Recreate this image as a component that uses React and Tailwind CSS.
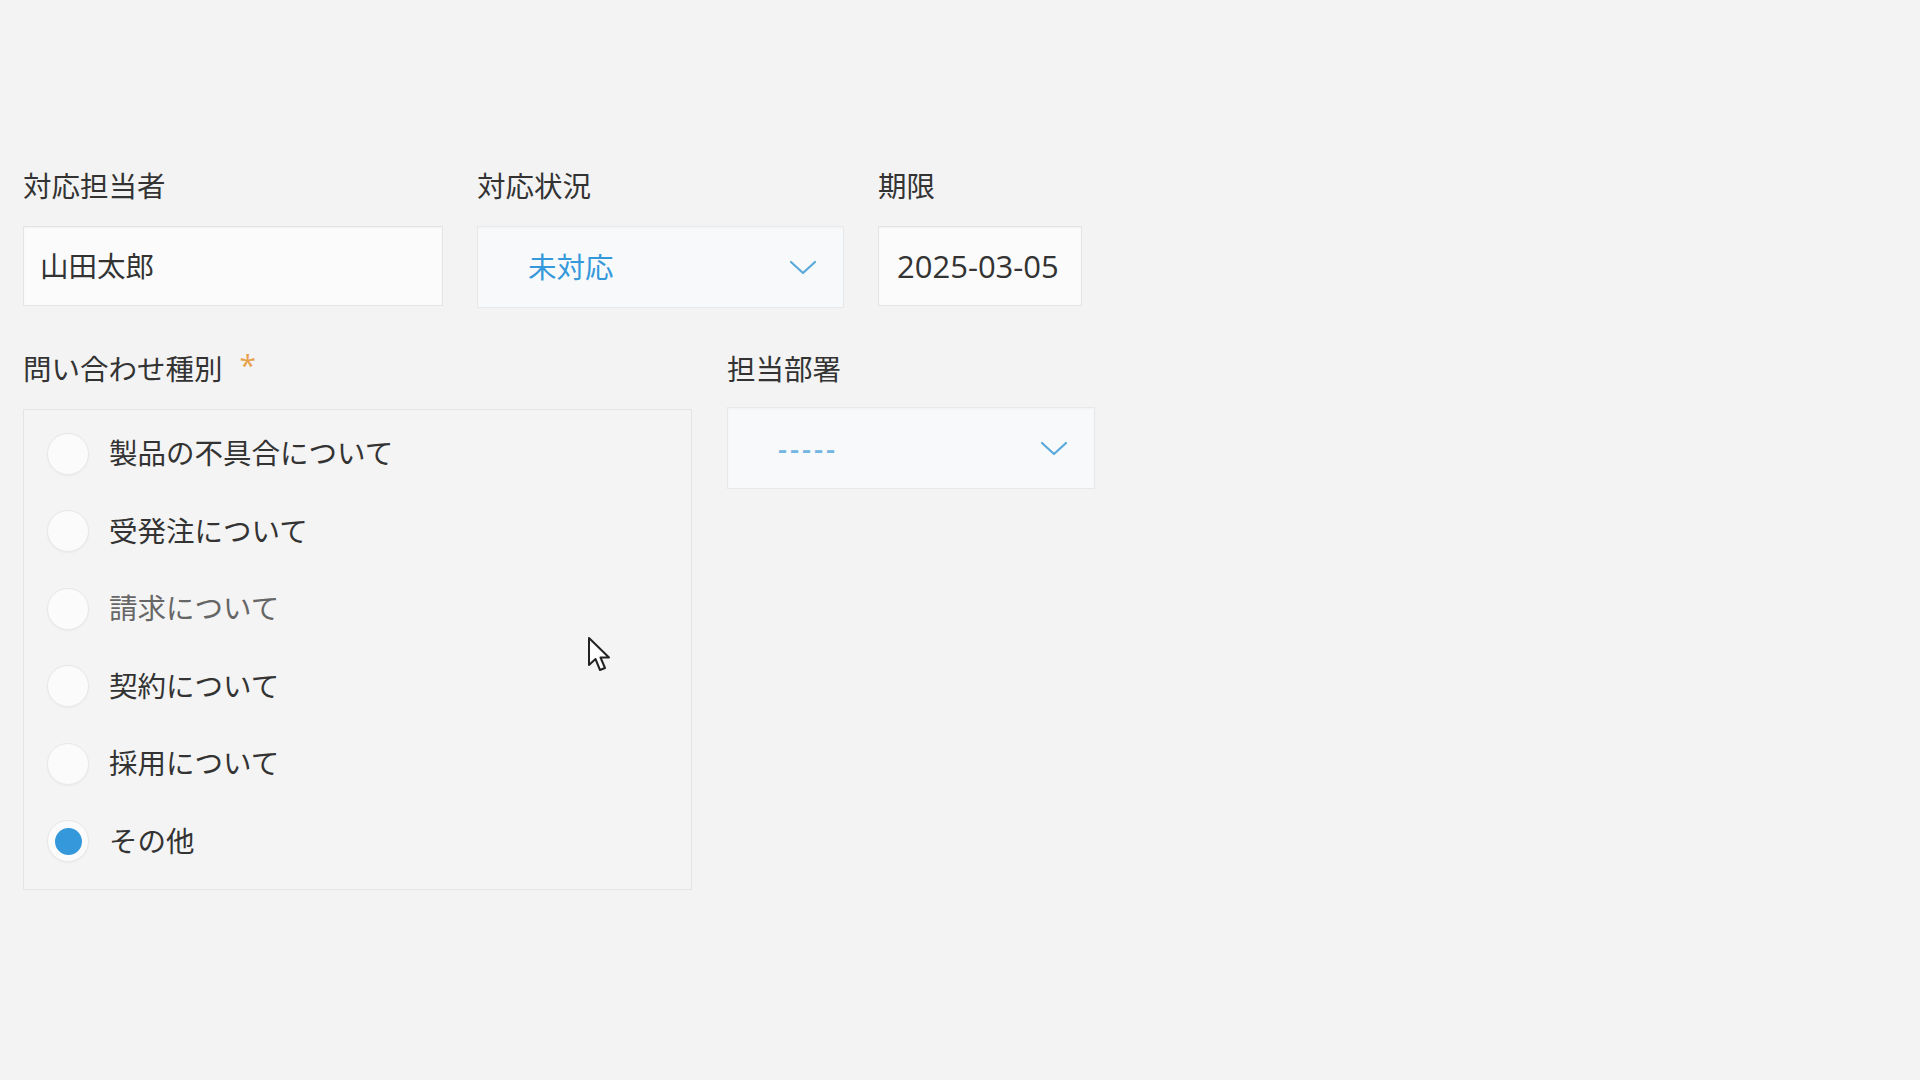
const FONT = { fontFamily: '"Open Sans", "Noto Sans CJK JP", sans-serif' };

const OPTIONS = [
  "製品の不具合について",
  "受発注について",
  "請求について",
  "契約について",
  "採用について",
  "その他",
];

function Chevron() {
  return (
    <svg width="28" height="15" viewBox="0 0 28 15" fill="none" className="shrink-0">
      <path d="M2 2 L14 13 L26 2" stroke="#5aa9da" strokeWidth="2.2" strokeLinecap="round" strokeLinejoin="round" />
    </svg>
  );
}

function Label({ children, required }) {
  return (
    <div className="flex h-[40px] items-center text-[28.5px] leading-[40px] text-[#333]">
      <span>{children}</span>
      {required && <span className="ml-[17px] -mt-[8px] text-[30px] text-[#e8a04a]">*</span>}
    </div>
  );
}

function SelectBox({ value, width, dashed }) {
  return (
    <div
      className="flex h-[82px] items-center justify-between border border-[#e6e8ea] bg-[#f7f9fa] pl-[50px] pr-[26px] shadow-[inset_0_1px_2px_rgba(0,0,0,0.03)]"
      style={{ width }}
    >
      <span className={dashed ? "text-[28px] font-semibold tracking-[3px] text-[#72b5e0]" : "text-[28.5px] text-[#3498db]"}>{value}</span>
      <Chevron />
    </div>
  );
}

function Radio({ checked }) {
  return (
    <div className="flex h-[42px] w-[42px] shrink-0 items-center justify-center rounded-full border border-[#e8e8e8] bg-[#fbfbfb] shadow-[0_1px_2px_rgba(0,0,0,0.04)]">
      {checked && <div className="h-[27px] w-[27px] rounded-full bg-[#3498db]" />}
    </div>
  );
}

export default function App() {
  return (
    <div className="relative min-h-screen bg-[#f3f3f3] pl-[23px] pt-[166px]" style={FONT}>
      <div className="flex gap-[34px]">
        <div className="flex flex-col gap-[20px]">
          <Label>対応担当者</Label>
          <div className="flex h-[80px] w-[420px] items-center border border-[#e4e4e4] bg-[#fbfbfb] pl-[16px] text-[28.5px] text-[#333] shadow-[inset_0_1px_2px_rgba(0,0,0,0.04)]">
            山田太郎
          </div>
        </div>
        <div className="flex flex-col gap-[20px]">
          <Label>対応状況</Label>
          <SelectBox value="未対応" width={367} />
        </div>
        <div className="flex flex-col gap-[20px]">
          <Label>期限</Label>
          <div className="flex h-[80px] w-[204px] items-center border border-[#e4e4e4] bg-[#fbfbfb] pl-[18px] text-[31px] text-[#333] shadow-[inset_0_1px_2px_rgba(0,0,0,0.04)]">
            2025-03-05
          </div>
        </div>
      </div>

      <div className="mt-[41px] flex gap-[35px]">
        <div className="flex flex-col gap-[20px]">
          <Label required>問い合わせ種別</Label>
          <div className="w-[669px] border border-[#e4e4e4] bg-[#f4f4f4] pb-[9px] pl-[23px] pt-[5px]">
            {OPTIONS.map((opt, i) => (
              <div key={opt} className="flex h-[77.5px] items-center gap-[20px]">
                <Radio checked={i === OPTIONS.length - 1} />
                <span className={"text-[28.5px] " + (i === 2 ? "text-[#666]" : "text-[#333]")}>{opt}</span>
              </div>
            ))}
          </div>
        </div>
        <div className="flex flex-col gap-[18px]">
          <Label>担当部署</Label>
          <SelectBox value="-----" width={368} dashed />
        </div>
      </div>

      {/* mouse pointer */}
      <svg className="absolute left-[586px] top-[636px]" width="30" height="40" viewBox="0 0 30 40">
        <path
          d="M3 2 L3 29 L9.5 23 L14 34 L19 32 L14.5 21.5 L23 21.5 Z"
          fill="#fff"
          stroke="#222"
          strokeWidth="2"
          strokeLinejoin="round"
        />
      </svg>
    </div>
  );
}
